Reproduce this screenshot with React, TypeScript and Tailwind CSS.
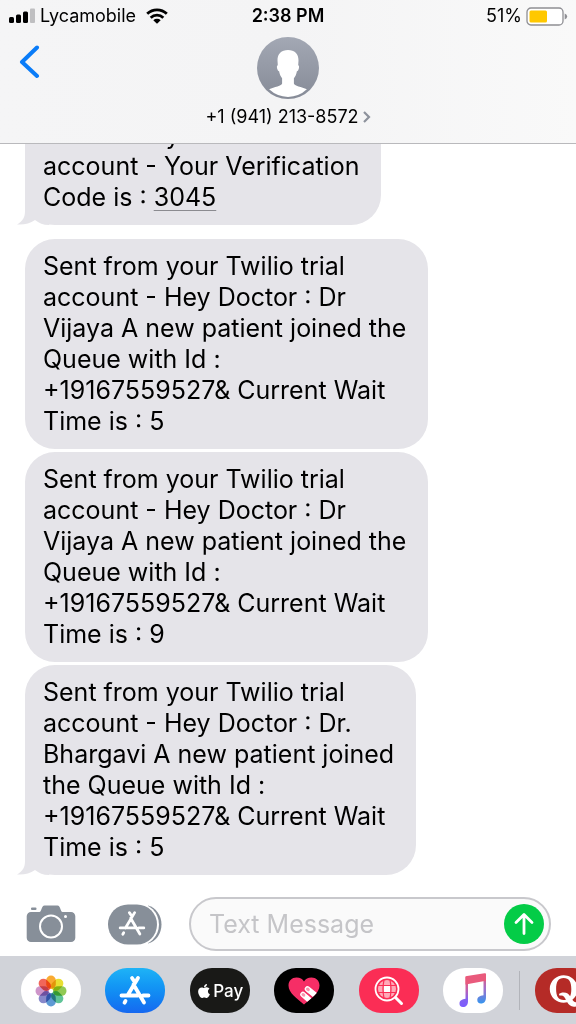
import React from 'react';
import { FaApple, FaQuora } from 'react-icons/fa';

type Message = { id: number; lines: string[]; code?: string; tail?: boolean; spaced?: boolean };

const messages: Message[] = [
  {
    id: 1,
    lines: ['Sent from your Twilio trial', 'account - Your Verification', 'Code is : '],
    code: '3045',
    tail: true,
    spaced: true,
  },
  {
    id: 2,
    lines: [
      'Sent from your Twilio trial',
      'account - Hey Doctor : Dr',
      'Vijaya A new patient joined the',
      'Queue with Id :',
      '+19167559527& Current Wait',
      'Time is : 5',
    ],
  },
  {
    id: 3,
    lines: [
      'Sent from your Twilio trial',
      'account - Hey Doctor : Dr',
      'Vijaya A new patient joined the',
      'Queue with Id :',
      '+19167559527& Current Wait',
      'Time is : 9',
    ],
  },
  {
    id: 4,
    lines: [
      'Sent from your Twilio trial',
      'account - Hey Doctor : Dr.',
      'Bhargavi A new patient joined',
      'the Queue with Id :',
      '+19167559527& Current Wait',
      'Time is : 5',
    ],
    tail: true,
  },
];

function StatusBar() {
  return (
    <div className="grid grid-cols-3 items-center h-8 px-2 text-[18px] leading-8">
      <div className="flex items-center gap-1">
        <svg width="28" height="16" viewBox="0 0 28 16" aria-hidden="true">
          <rect x="1" y="9" width="5" height="6" rx="1.5" />
          <rect x="8" y="6.5" width="5" height="8.5" rx="1.5" />
          <rect x="15" y="3.5" width="5" height="11.5" rx="1.5" />
          <rect x="22" y="0.5" width="5" height="14.5" rx="1" fill="#bfbfc1" />
        </svg>
        <span>Lycamobile</span>
        <svg className="ml-1.5" width="22" height="16" viewBox="0 0 22 16" aria-hidden="true">
          <g fill="none" stroke="#000" strokeWidth="2.8">
            <path d="M1.200 5.800a14 14 0 0 1 19.600 0" />
            <path d="M4.700 9.700a9 9 0 0 1 12.600 0" />
          </g>
          <path d="M7.300 12.200a5.400 5.400 0 0 1 7.400 0L11 15.800Z" />
        </svg>
      </div>
      <div className="text-center font-semibold">2:38 PM</div>
      <div className="flex items-center justify-end gap-1">
        <span>51%</span>
        <svg width="42" height="19" viewBox="0 0 42 19" aria-hidden="true">
          <rect x="1" y="1" width="36" height="17" rx="4" fill="#fff" stroke="#8e8e93" strokeWidth="1.3" />
          <rect x="3.5" y="3.5" width="17.5" height="12" rx="1.5" fill="#ffc800" />
          <path d="M38.700 6.500q2.500 1 2.500 3t-2.500 3Z" fill="#8e8e93" />
        </svg>
      </div>
    </div>
  );
}

function Header() {
  return (
    <header className="shrink-0 border-b border-[#b9b9bc] bg-gradient-to-r from-[#f5f5f6] via-[#f4f4f5] to-[#f9f9f9]">
      <StatusBar />
      <div className="grid grid-cols-[1fr_auto_1fr] items-start h-[111px] px-4 pt-[5px]">
        <button type="button" aria-label="Back" className="w-8 h-10 flex items-start pt-2 pl-[3px]">
          <svg width="21" height="34" viewBox="0 0 21 34" fill="none" aria-hidden="true">
            <path d="M18 2.500 3 17l15 14" stroke="#0a7cf8" strokeWidth="4" strokeLinecap="round" strokeLinejoin="round" />
          </svg>
        </button>
        <button type="button" className="flex flex-col items-center gap-[6px]">
          <svg width="62" height="62" viewBox="0 0 62 62" aria-hidden="true">
            <defs>
              <linearGradient id="avatar" x1="0" y1="0" x2="0" y2="1">
                <stop offset="0" stopColor="#a3a8b4" />
                <stop offset="1" stopColor="#868b97" />
              </linearGradient>
            </defs>
            <circle cx="31" cy="31" r="31" fill="url(#avatar)" />
            <path
              fill="#fff"
              d="M31 13c-6.500 0-10.700 4-10.500 10.500l.3 4.700c-1.300.2-1 2.500-.3 4.300.4 1.200 1 1.800 1.600 1.700.5 3 1.500 5.300 3 7v5.300c0 2.500-8 3.300-13 5.800A29 29 0 0 0 31 60a29 29 0 0 0 18.900-7.700c-5-2.500-13-3.300-13-5.800v-5.300c1.500-1.700 2.500-4 3-7 .6.100 1.200-.5 1.600-1.700.7-1.800 1-4.100-.3-4.300l.3-4.700C41.700 17 37.500 13 31 13Z"
            />
          </svg>
          <span className="flex items-center gap-[3px] text-[18px] leading-6">
            +1 (941) 213-8572
            <svg width="9" height="14" viewBox="0 0 9 14" fill="none" aria-hidden="true">
              <path d="m2 2 5 5-5 5" stroke="#8d929c" strokeWidth="2.2" />
            </svg>
          </span>
        </button>
      </div>
    </header>
  );
}

function Bubble({ message }: { message: Message }) {
  return (
    <div
      className={`relative w-fit shrink-0 rounded-[30px] bg-[#e5e4e9] pl-[18px] pr-[22px] py-3 text-[25px] leading-[31px] whitespace-pre ${
        message.spaced ? 'mb-[11px]' : ''
      }`}
    >
      {message.tail && (
        <svg className="absolute -left-2 bottom-0" width="38" height="36" viewBox="0 0 38 36" aria-hidden="true">
          <path d="M8 0v22c0 6-2 10-8 13.500 7 .5 13-1 18-4.500 4 3 8 5 14 5L38 18Z" fill="#e5e4e9" />
        </svg>
      )}
      <p className="relative">
        {message.lines.map((line, index) => (
          <React.Fragment key={index}>
            {index > 0 && <br />}
            {line}
          </React.Fragment>
        ))}
        {message.code && (
          <a href="#code" className="underline decoration-[#8b8b90] decoration-1 underline-offset-4">
            {message.code}
          </a>
        )}
      </p>
    </div>
  );
}

function AppStoreMark({ size, width }: { size: number; width: number }) {
  return (
    <svg
      width={size}
      height={size}
      viewBox="0 0 32 32"
      fill="none"
      stroke="#fff"
      strokeWidth={width}
      strokeLinecap="round"
      aria-hidden="true"
    >
      <path d="M13 3 16 7.500M19 3 8.500 20.500M14.500 9.500l10.500 18M2.500 20.500h16.500M24 20.500h5.500M6.500 26l-1 1.700" />
    </svg>
  );
}

function Composer() {
  return (
    <form className="flex shrink-0 items-center pl-[26px] pr-[25px] pt-[22px] pb-[5px]" onSubmit={(e) => e.preventDefault()}>
      <button type="button" aria-label="Camera">
        <svg width="50" height="38" viewBox="0 0 50 38" aria-hidden="true">
          <path
            fill="#878f99"
            d="M5 7h8.500c2 0 2-6.500 5-6.500h13c3 0 3 6.500 5 6.500H45a4.300 4.300 0 0 1 4.300 4.300v21.400A4.300 4.300 0 0 1 45 37H5a4.300 4.300 0 0 1-4.300-4.300V11.300A4.300 4.300 0 0 1 5 7Z"
          />
          <rect x="5" y="2.5" width="5.5" height="2.5" rx="1" fill="#878f99" />
          <circle cx="25" cy="21.5" r="11" fill="none" stroke="#fff" strokeWidth="2" />
          <circle cx="39.5" cy="11.5" r="1.5" fill="#fff" />
        </svg>
      </button>
      <button type="button" aria-label="Apps" className="ml-8 grid items-center">
        <svg className="col-start-1 row-start-1" width="54" height="41" viewBox="0 0 54 41" aria-hidden="true">
          <path d="M40 1.500c8 2 13.500 10 13.500 19s-5.500 17-13.500 19Z" fill="#878f99" />
          <rect x="-1" y="-1" width="52" height="43" rx="21.5" fill="#fff" />
          <rect x="0" y="0.5" width="49" height="40" rx="20" fill="#878f99" />
        </svg>
        <span className="col-start-1 row-start-1 pl-[10px]">
          <AppStoreMark size={28} width={3.2} />
        </span>
      </button>
      <div className="ml-[27px] flex h-[54px] min-w-0 flex-1 items-center rounded-full border-2 border-[#c8c8cc] bg-[#fafafa] pl-[18px] pr-[5px]">
        <input
          type="text"
          aria-label="Text Message"
          placeholder="Text Message"
          className="min-w-0 flex-1 bg-transparent text-[25px] leading-8 outline-none placeholder:text-[#c5c5c8]"
        />
        <button type="submit" aria-label="Send" className="shrink-0">
          <svg width="40" height="40" viewBox="0 0 40 40" fill="none" aria-hidden="true">
            <circle cx="20" cy="20" r="20" fill="#04cc47" />
            <path d="M20 29.500V11M12 18.500l8-8 8 8" stroke="#fff" strokeWidth="2.8" strokeLinecap="round" strokeLinejoin="round" />
          </svg>
        </button>
      </div>
    </form>
  );
}

const petals = ['#f9a11b', '#e6dc1c', '#84c341', '#4fbe8d', '#4c8fd0', '#7a7bc5', '#c98ac4', '#f05548'];

function PhotosIcon() {
  return (
    <svg width="34" height="34" viewBox="-17 -17 34 34" aria-hidden="true">
      {petals.map((color, index) => (
        <rect
          key={color}
          x="-4.8"
          y="-15.5"
          width="9.6"
          height="13.500"
          rx="4.8"
          fill={color}
          opacity="0.9"
          transform={`rotate(${index * 45})`}
          style={{ mixBlendMode: 'multiply' }}
        />
      ))}
      <circle r="1.5" fill="#fff" />
    </svg>
  );
}

function HeartIcon() {
  return (
    <svg width="32" height="28" viewBox="0 0 32 28" aria-hidden="true">
      <defs>
        <clipPath id="heart">
          <path d="M16 27.500C9 21.500.5 16 .5 8.500.5 3.500 4 .5 8.500.5c3.500 0 6 1.500 7.500 4 1.500-2.500 4-4 7.500-4 4.500 0 8 3 8 8 0 7.500-8.500 13-15.500 19Z" />
        </clipPath>
      </defs>
      <g clipPath="url(#heart)">
        <rect width="32" height="28" fill="#f62e66" />
        <g strokeLinecap="round" fill="none">
          <path d="M19.500 12 32 22M15 17.500 27 28" stroke="#fff" strokeWidth="5.6" />
          <path d="M19.500 12l.8.700M15 17.500l.8.700" stroke="#f895b0" strokeWidth="3" />
          <path d="m17 14.500 13 11" stroke="#f62e66" strokeWidth="1" />
        </g>
      </g>
    </svg>
  );
}

function SearchGlobeIcon() {
  return (
    <svg width="30" height="30" viewBox="0 0 30 30" fill="none" aria-hidden="true">
      <circle cx="13" cy="13" r="11.500" stroke="#fff" strokeWidth="1.8" />
      <circle cx="13" cy="13" r="9" fill="#ffa9b8" />
      <rect x="10" y="10" width="6" height="6" fill="#fff" />
      <path d="M10 4q-2 9 0 18M16 4q2 9 0 18M4 9.500h18M4 16.500h18" stroke="#fb2d55" strokeWidth="1.2" />
      <path d="m21.500 21.500 6 6" stroke="#fff" strokeWidth="3" strokeLinecap="round" />
    </svg>
  );
}

function MusicIcon() {
  return (
    <svg width="28" height="36" viewBox="0 0 28 36" aria-hidden="true">
      <defs>
        <linearGradient id="note" x1="0" y1="0" x2="0" y2="1">
          <stop offset="0" stopColor="#f2566b" />
          <stop offset="0.35" stopColor="#cf609f" />
          <stop offset="0.75" stopColor="#8262f0" />
          <stop offset="1" stopColor="#7c5cff" />
        </linearGradient>
        <linearGradient id="noteRight" x1="0" y1="0" x2="0" y2="1">
          <stop offset="0" stopColor="#f2566b" />
          <stop offset="0.5" stopColor="#a070cc" />
          <stop offset="1" stopColor="#3495ef" />
        </linearGradient>
      </defs>
      <path d="M9 3.500v24.500c0 4-2 6-5 6-2.500 0-3.500-1.500-3.500-3.500 0-3 2.500-4 6-4.700V3.500Z" fill="url(#note)" />
      <path d="M27 1v23c0 4.500-2 6.500-5 6.500-2.500 0-3.700-1.500-3.700-3.500 0-3 2.500-4 6.200-4.700V4Z" fill="url(#noteRight)" />
      <path d="M6.500 4.700c0-1 .5-1.500 1.500-1.700L25.500.3c1-.2 1.500.2 1.500 1.200v6.300L6.500 11.500Z" fill="#e95a7c" />
    </svg>
  );
}

const pill = 'flex h-[45px] w-[60px] shrink-0 items-center justify-center rounded-[22px]';

function AppStrip() {
  return (
    <nav aria-label="Apps" className="flex shrink-0 items-start overflow-hidden bg-[#d1d3d9] pt-3 pb-[11px] pl-[21px]">
      <div className="flex flex-1 justify-between">
        <button type="button" aria-label="Photos" className={`${pill} bg-white`}>
          <PhotosIcon />
        </button>
        <button type="button" aria-label="App Store" className={`${pill} bg-gradient-to-b from-[#1fb3f6] to-[#1768f0]`}>
          <AppStoreMark size={32} width={3.8} />
        </button>
        <button type="button" className={`${pill} bg-[#191917] text-[17px] font-medium leading-5 text-white`}>
          <FaApple size={16} aria-hidden="true" />
          <span className="pl-[1px]">Pay</span>
        </button>
        <button type="button" aria-label="Digital Touch" className={`${pill} bg-black`}>
          <HeartIcon />
        </button>
        <button type="button" aria-label="Images" className={`${pill} bg-[#fb2d55]`}>
          <SearchGlobeIcon />
        </button>
        <button type="button" aria-label="Music" className={`${pill} bg-white`}>
          <MusicIcon />
        </button>
      </div>
      <div className="ml-4 mr-[15px] mt-[3px] h-[39px] w-px bg-[#b2b4ba]" />
      <div className="flex w-[41px]">
        <button type="button" aria-label="Quora" className={`${pill} bg-[#b52b27] text-white`}>
          <FaQuora size={36} aria-hidden="true" />
        </button>
      </div>
    </nav>
  );
}

export default function App() {
  return (
    <div className="flex h-screen flex-col overflow-hidden bg-white font-['Inter','Liberation_Sans',sans-serif] text-black">
      <Header />
      <main className="flex min-h-0 flex-1 flex-col justify-end gap-[3px] overflow-hidden pl-[25px]">
        {messages.map((message) => (
          <Bubble key={message.id} message={message} />
        ))}
      </main>
      <Composer />
      <AppStrip />
    </div>
  );
}
